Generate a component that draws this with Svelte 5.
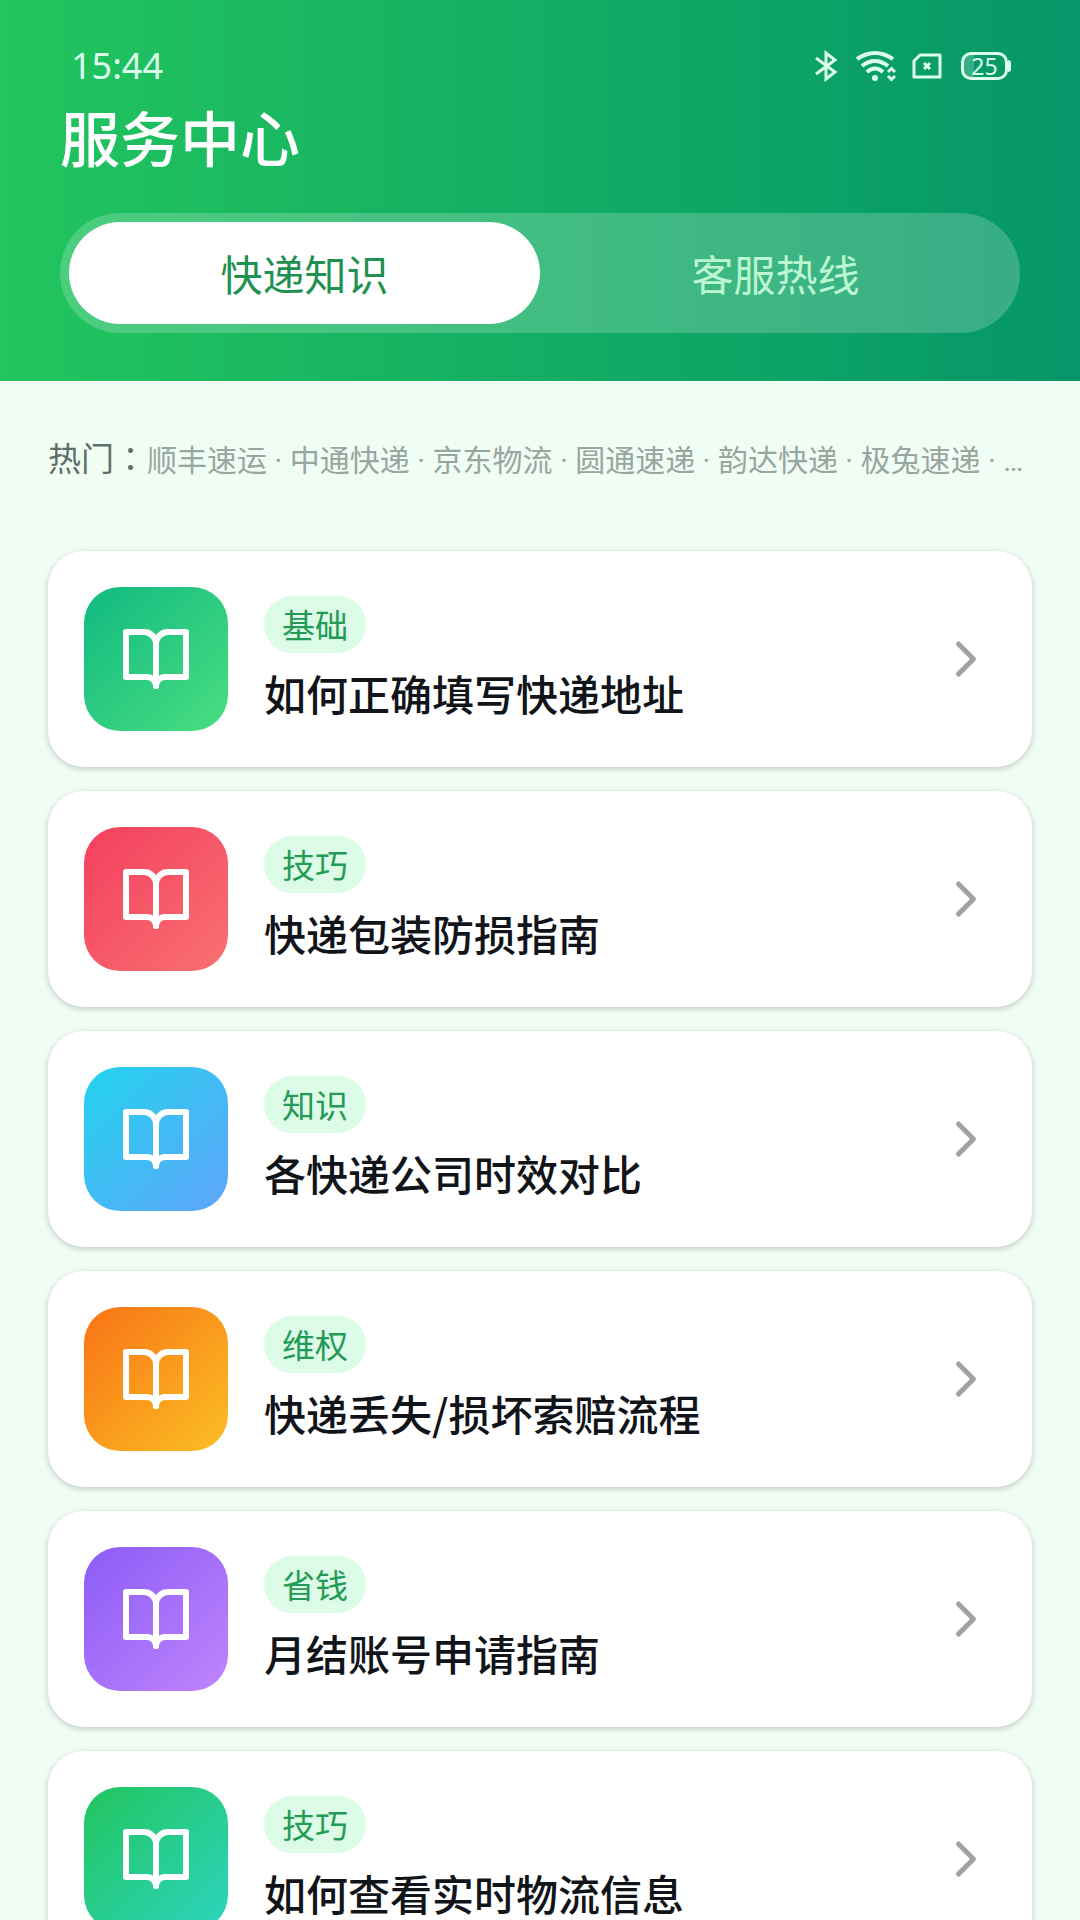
<script lang="ts">
  type Article = {
    tag: string;
    title: string;
    from: string;
    to: string;
  };

  const tabs = ['快递知识', '客服热线'];
  let activeTab = $state(0);

  const hotCompanies = ['顺丰速运', '中通快递', '京东物流', '圆通速递', '韵达快递', '极兔速递', '…'];

  const articles: Article[] = [
    { tag: '基础', title: '如何正确填写快递地址', from: '#10b981', to: '#4ade80' },
    { tag: '技巧', title: '快递包装防损指南', from: '#f43f5e', to: '#f87171' },
    { tag: '知识', title: '各快递公司时效对比', from: '#22d3ee', to: '#60a5fa' },
    { tag: '维权', title: '快递丢失/损坏索赔流程', from: '#f97316', to: '#fbbf24' },
    { tag: '省钱', title: '月结账号申请指南', from: '#8b5cf6', to: '#c084fc' },
    { tag: '技巧', title: '如何查看实时物流信息', from: '#22c55e', to: '#2dd4bf' },
  ];
</script>

<div class="page">
  <header class="header">
    <div class="status-bar">
      <span class="time">15:44</span>
      <div class="status-icons">
        <svg width="24" height="32" viewBox="0 0 24 32" aria-hidden="true">
          <path d="M2 8 L21 22 L12 29 V3 L21 10 L2 24" fill="none" stroke="currentColor" stroke-width="3" />
        </svg>
        <svg class="wifi" width="40" height="32" viewBox="0 0 40 32" aria-hidden="true">
          <g fill="none" stroke="currentColor" stroke-width="4">
            <path d="M1 9 Q19 -3 37 9" />
            <path d="M6 16 Q19 6 32 16" />
            <path d="M11 22 Q19 15 27 22" />
          </g>
          <circle cx="19" cy="28" r="3" fill="currentColor" />
          <path d="M32 22 L35.500 18.500 L39 22 M32 26 L35.500 29.500 L39 26" fill="none" stroke="currentColor" stroke-width="3" />
        </svg>
        <svg class="sim" width="30" height="26" viewBox="0 0 30 26" aria-hidden="true">
          <path d="M8 2 H28 V24 H2 V8 Z" fill="none" stroke="currentColor" stroke-width="3" stroke-linejoin="round" />
          <path d="M12 10 L18 16 M18 10 L12 16" stroke="currentColor" stroke-width="3" />
        </svg>
        <div class="battery">25</div>
      </div>
    </div>

    <h1>服务中心</h1>

    <div class="tabs" role="tablist">
      {#each tabs as tab, i}
        <button
          class="tab"
          class:active={activeTab === i}
          role="tab"
          aria-selected={activeTab === i}
          onclick={() => (activeTab = i)}
        >
          {tab}
        </button>
      {/each}
    </div>
  </header>

  <main>
    <div class="hot">
      <span class="hot-label">热门<span class="colon" lang="zh-TW">：</span></span>
      <span class="hot-list">{hotCompanies.join(' · ')}</span>
    </div>

    <ul class="articles">
      {#each articles as a}
        <li>
          <button class="card">
            <span class="card-icon" style="background: linear-gradient(135deg, {a.from}, {a.to})">
              <svg width="72" height="72" viewBox="0 0 24 24" aria-hidden="true">
                <path d="M2 3h6a4 4 0 0 1 4 4v14a3 3 0 0 0-3-3H2z" />
                <path d="M22 3h-6a4 4 0 0 0-4 4v14a3 3 0 0 1 3-3h7z" />
              </svg>
            </span>
            <span class="card-body">
              <span class="tag">{a.tag}</span>
              <span class="card-title">{a.title}</span>
            </span>
            <svg class="chevron" width="60" height="60" viewBox="0 0 24 24" aria-hidden="true">
              <path d="M9 6l6 6-6 6" />
            </svg>
          </button>
        </li>
      {/each}
    </ul>
  </main>
</div>

<style>
  :global(body) {
    background: #f0fdf4;
  }

  .page {
    font-family: 'Noto Sans CJK SC', sans-serif;
    min-height: 100vh;
  }

  .header {
    padding: 42px 60px 48px;
    background: linear-gradient(90deg, #22c55e, #059669);
    color: #fff;
  }

  .status-bar {
    display: flex;
    align-items: center;
    justify-content: space-between;
    height: 48px;
    padding: 0 9px 0 11px;
    color: #dcffec;
  }

  .time {
    font-family: 'Noto Sans', sans-serif;
    font-size: 36px;
    line-height: 48px;
  }

  .status-icons {
    display: flex;
    align-items: center;
  }

  .wifi {
    margin-left: 18px;
  }

  .sim {
    margin-left: 16px;
  }

  .battery {
    position: relative;
    box-sizing: border-box;
    width: 47px;
    height: 28px;
    margin: 0 3px 0 19px;
    border: 3px solid currentColor;
    border-radius: 10px;
    background: linear-gradient(90deg, rgba(255, 255, 255, 0.2) 25%, transparent 25%);
    font-family: 'Noto Sans', sans-serif;
    font-size: 23px;
    line-height: 22px;
    text-align: center;
  }

  .battery::after {
    content: '';
    position: absolute;
    top: 5px;
    right: -6px;
    width: 3px;
    height: 12px;
    border-radius: 0 3px 3px 0;
    background: currentColor;
  }

  h1 {
    margin: 0 0 31px;
    font-size: 60px;
    font-weight: 500;
    line-height: 92px;
  }

  .tabs {
    display: flex;
    padding: 9px;
    border-radius: 60px;
    background: rgba(255, 255, 255, 0.2);
  }

  .tab {
    flex: 1;
    height: 102px;
    padding: 0 0 2px;
    border: none;
    border-radius: 51px;
    background: transparent;
    color: #bbf7d0;
    font-family: inherit;
    font-size: 42px;
    cursor: pointer;
  }

  .tab.active {
    background: #fff;
    color: #1f9150;
  }

  main {
    padding: 48px;
  }

  .hot {
    display: flex;
    align-items: baseline;
    height: 56px;
    margin-bottom: 66px;
    line-height: 56px;
    white-space: nowrap;
  }

  .hot-label {
    flex: none;
    color: #5f6f68;
    font-size: 33px;
  }

  .colon {
    font-family: 'Noto Sans CJK TC', sans-serif;
  }

  /* latin font first, so the separator dots stay narrow */
  .hot-list {
    color: #98a5a0;
    font-family: Roboto, 'Noto Sans CJK SC', sans-serif;
    font-size: 30px;
  }

  .articles {
    display: flex;
    flex-direction: column;
    gap: 24px;
    margin: 0;
    padding: 0;
    list-style: none;
  }

  .card {
    display: flex;
    align-items: center;
    gap: 36px;
    width: 100%;
    padding: 36px;
    border: none;
    border-radius: 36px;
    background: #fff;
    box-shadow: 0 2px 6px rgba(0, 0, 0, 0.2);
    font-family: inherit;
    text-align: left;
    cursor: pointer;
  }

  .card-icon {
    display: flex;
    flex: none;
    align-items: center;
    justify-content: center;
    width: 144px;
    height: 144px;
    border-radius: 36px;
  }

  .card-icon svg {
    fill: none;
    stroke: #fff;
    stroke-width: 2;
    stroke-linecap: round;
    stroke-linejoin: round;
  }

  .card-body {
    display: flex;
    flex: 1;
    flex-direction: column;
    align-items: flex-start;
    gap: 12px;
    min-width: 0;
  }

  .tag {
    padding: 6px 18px;
    border-radius: 30px;
    background: #dcfce7;
    color: #239a55;
    font-size: 33px;
    line-height: 45px;
  }

  .card-title {
    padding-bottom: 1px;
    color: #111519;
    font-size: 42px;
    font-weight: 500;
    line-height: 56px;
  }

  .chevron {
    flex: none;
    fill: none;
    stroke: #9fa1a3;
    stroke-width: 2;
    stroke-linecap: round;
    stroke-linejoin: round;
  }
</style>
